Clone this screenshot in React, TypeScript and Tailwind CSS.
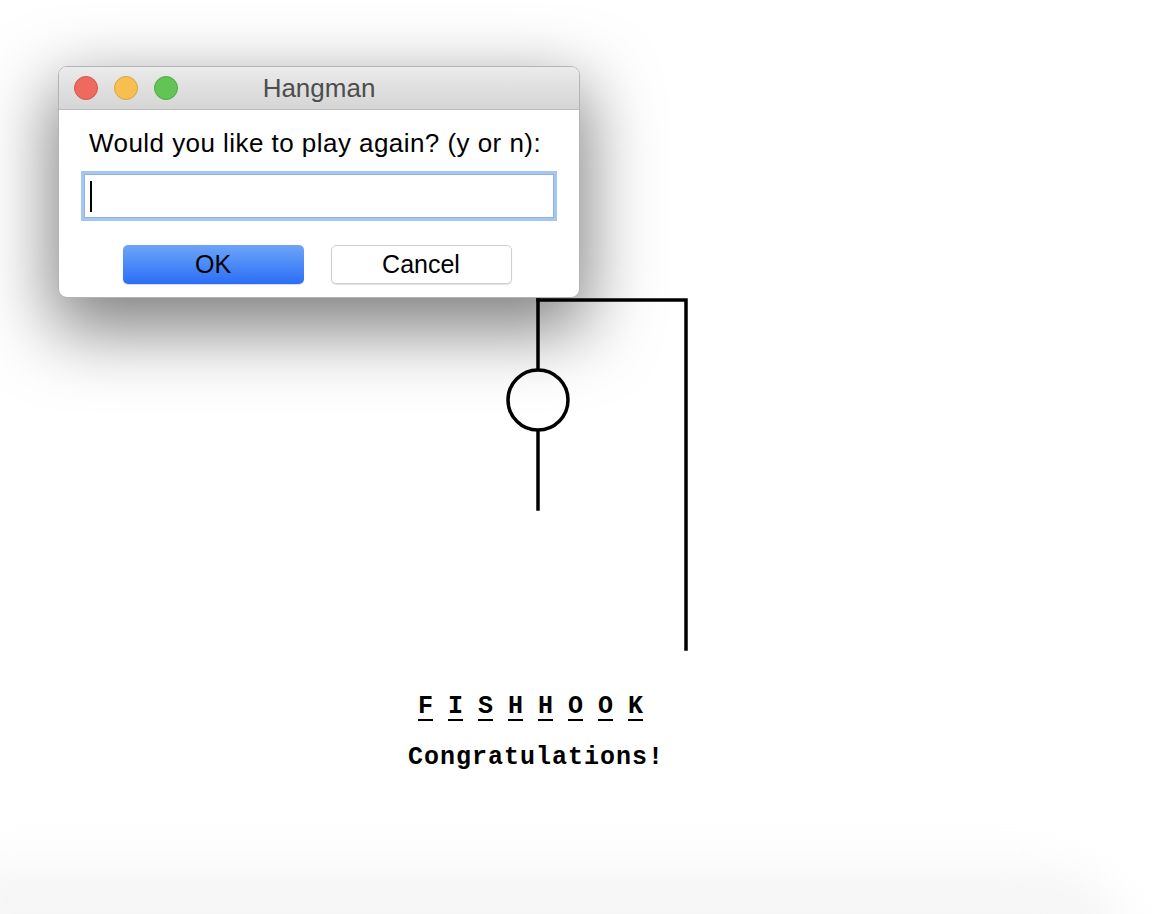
import React from 'react';

const WORD = ['F', 'I', 'S', 'H', 'H', 'O', 'O', 'K'];

const TrafficLights: React.FC = () => (
  <div className="flex items-center gap-[16px]">
    <span className="block w-[24px] h-[24px] rounded-full bg-[#ee6a5f] border border-[#d6544a]"></span>
    <span className="block w-[24px] h-[24px] rounded-full bg-[#f6bf4f] border border-[#dca33c]"></span>
    <span className="block w-[24px] h-[24px] rounded-full bg-[#61c454] border border-[#4fab42]"></span>
  </div>
);

const Dialog: React.FC = () => (
  <div className="absolute left-[58px] top-[66px] w-[522px] h-[232px] rounded-[9px] bg-white border border-[#b4b4b4] shadow-[0_26px_70px_6px_rgba(0,0,0,0.5)] overflow-hidden flex flex-col">
    {/* title bar */}
    <div className="relative h-[43px] shrink-0 flex items-center px-[15px] bg-gradient-to-b from-[#ebebeb] to-[#d5d5d5] border-b border-[#bcbcbc]">
      <TrafficLights />
      <span className="absolute inset-0 flex items-center justify-center text-[26px] leading-none text-[#4d4d4d] pb-[1px]">
        Hangman
      </span>
    </div>
    {/* body */}
    <div className="flex-1 flex flex-col px-[22px] pt-[17px]">
      <p className="text-[26px] leading-[32px] tracking-[0.45px] text-black pl-[8px]">
        Would you like to play again? (y or n):
      </p>
      <div className="mt-[12px] h-[50px] border-[3px] border-[#a4c6f3] flex items-center">
        <div className="flex-1 h-full border border-[#8fb3e3] bg-white flex items-center pl-[5px]">
          <span className="block w-[2px] h-[31px] bg-black"></span>
        </div>
      </div>
      <div className="mt-[24px] flex justify-center gap-[27px] pr-[4px]">
        <button className="w-[181px] h-[39px] rounded-[5px] bg-gradient-to-b from-[#6da4f8] to-[#2a6ef5] text-[25px] leading-none text-black shadow-[0_1px_1px_rgba(0,0,0,0.15)]">
          OK
        </button>
        <button className="w-[181px] h-[39px] rounded-[5px] bg-white border border-[#cfcfcf] text-[25px] leading-none text-black shadow-[0_1px_1px_rgba(0,0,0,0.12)]">
          Cancel
        </button>
      </div>
    </div>
  </div>
);

const Gallows: React.FC = () => (
  <svg className="absolute inset-0 pointer-events-none" width="1172" height="914" viewBox="0 0 1172 914">
    <g stroke="#000" strokeWidth="3.5" fill="none" strokeLinecap="square">
      <path d="M538 300 H686 V649" />
      <path d="M538 300 V369" />
      <circle cx="538" cy="400" r="30" />
      <path d="M538 431 V509" />
    </g>
  </svg>
);

export default function App() {
  return (
    <div
      className="relative w-[1172px] h-[914px] bg-white overflow-hidden"
      style={{ fontFamily: '"Liberation Sans", Arial, sans-serif' }}
    >
      {/* faint shadow of the window underneath */}
      <div className="absolute left-[-40px] bottom-[-40px] w-[1170px] h-[90px] rounded-tr-[160px] bg-[#f6f6f6] blur-[22px]"></div>

      <Gallows />

      {/* word + message */}
      <div className="absolute left-[418px] top-[693px] font-['Liberation_Mono',_'Courier_New',_monospace] font-bold text-black">
        <div className="flex gap-[15px]">
          {WORD.map((ch, i) => (
            <div key={i} className="w-[15px] flex flex-col items-center">
              <span className="text-[25px] leading-[28px]">{ch}</span>
              <span className="block w-[15px] h-[2px] mt-[-2px] bg-black"></span>
            </div>
          ))}
        </div>
      </div>
      <div className="absolute left-[408px] top-[744px] font-['Liberation_Mono',_'Courier_New',_monospace] font-bold text-black text-[25px] leading-[28px] tracking-[1px]">
        Congratulations!
      </div>

      <Dialog />
    </div>
  );
}
